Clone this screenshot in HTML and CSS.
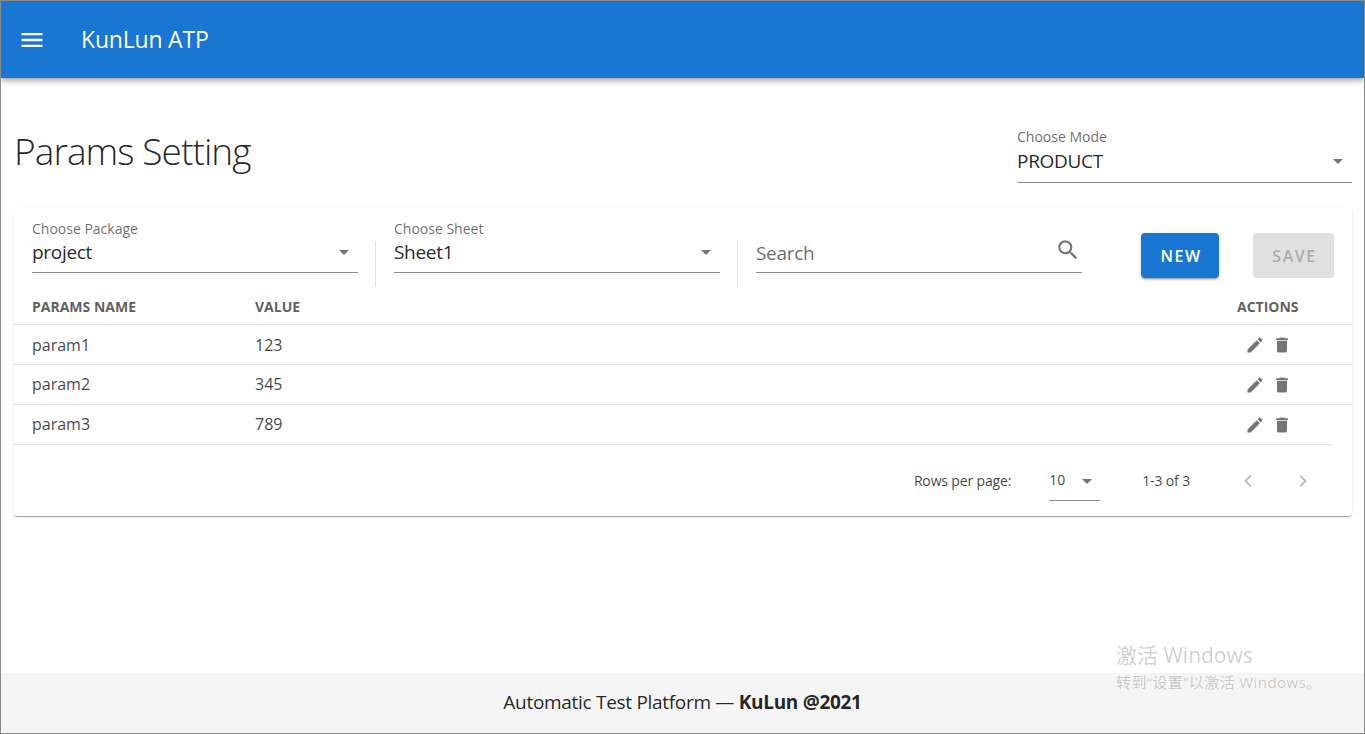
FILE: index.html
```html
<!DOCTYPE html>
<html lang="en">

<head>
    <meta charset="utf-8">
    <title>KunLun ATP</title>
    <link rel="stylesheet" href="styles.css">
</head>

<body>
    <div class="app">
        <header class="appbar">
            <svg class="menu-icon" viewBox="0 0 24 24" width="28" height="28"><path d="M3 18h18v-2H3v2zm0-5h18v-2H3v2zm0-7v2h18V6H3z"/></svg>
            <div class="brand">KunLun ATP</div>
        </header>

        <main class="content">
            <div class="page-head">
                <h1 class="page-title">Params Setting</h1>
                <div class="field mode-field">
                    <label>Choose Mode</label>
                    <div class="field-value">PRODUCT<span class="caret"></span></div>
                </div>
            </div>

            <section class="card">
                <div class="toolbar">
                    <div class="field">
                        <label>Choose Package</label>
                        <div class="field-value">project<span class="caret"></span></div>
                    </div>
                    <div class="divider"></div>
                    <div class="field">
                        <label>Choose Sheet</label>
                        <div class="field-value">Sheet1<span class="caret"></span></div>
                    </div>
                    <div class="divider"></div>
                    <div class="field search-field">
                        <div class="field-value search-text">Search
                            <svg class="search-icon" viewBox="0 0 24 24" width="26" height="26"><path d="M15.5 14h-.79l-.28-.27A6.47 6.47 0 0 0 16 9.5 6.5 6.5 0 1 0 9.5 16c1.61 0 3.09-.59 4.23-1.57l.27.28v.79l5 4.99L20.49 19l-4.99-5zm-6 0C7.01 14 5 11.99 5 9.5S7.01 5 9.5 5 14 7.01 14 9.5 11.99 14 9.5 14z"/></svg>
                        </div>
                    </div>
                    <button class="btn btn-new">NEW</button>
                    <button class="btn btn-save">SAVE</button>
                </div>

                <div class="row row-head">
                    <div>PARAMS NAME</div>
                    <div>VALUE</div>
                    <div>ACTIONS</div>
                </div>
                <div class="row">
                    <div>param1</div>
                    <div>123</div>
                    <div class="actions">
                        <svg viewBox="0 0 24 24" width="20" height="20"><path d="M3 17.25V21h3.75L17.81 9.94l-3.75-3.75L3 17.25zM20.71 7.04a1 1 0 0 0 0-1.41l-2.34-2.34a1 1 0 0 0-1.41 0l-1.83 1.83 3.75 3.75 1.83-1.83z"/></svg>
                        <svg viewBox="0 0 24 24" width="20" height="20"><path d="M6 19c0 1.1.9 2 2 2h8c1.1 0 2-.9 2-2V7H6v12zM19 4h-3.5l-1-1h-5l-1 1H5v2h14V4z"/></svg>
                    </div>
                </div>
                <div class="row row-up">
                    <div>param2</div>
                    <div>345</div>
                    <div class="actions">
                        <svg viewBox="0 0 24 24" width="20" height="20"><path d="M3 17.25V21h3.75L17.81 9.94l-3.75-3.75L3 17.25zM20.71 7.04a1 1 0 0 0 0-1.41l-2.34-2.34a1 1 0 0 0-1.41 0l-1.83 1.83 3.75 3.75 1.83-1.83z"/></svg>
                        <svg viewBox="0 0 24 24" width="20" height="20"><path d="M6 19c0 1.1.9 2 2 2h8c1.1 0 2-.9 2-2V7H6v12zM19 4h-3.5l-1-1h-5l-1 1H5v2h14V4z"/></svg>
                    </div>
                </div>
                <div class="row row-up row-last">
                    <div>param3</div>
                    <div>789</div>
                    <div class="actions">
                        <svg viewBox="0 0 24 24" width="20" height="20"><path d="M3 17.25V21h3.75L17.81 9.94l-3.75-3.75L3 17.25zM20.71 7.04a1 1 0 0 0 0-1.41l-2.34-2.34a1 1 0 0 0-1.41 0l-1.83 1.83 3.75 3.75 1.83-1.83z"/></svg>
                        <svg viewBox="0 0 24 24" width="20" height="20"><path d="M6 19c0 1.1.9 2 2 2h8c1.1 0 2-.9 2-2V7H6v12zM19 4h-3.5l-1-1h-5l-1 1H5v2h14V4z"/></svg>
                    </div>
                </div>

                <div class="pager">
                    <span class="pager-text">Rows per page:</span>
                    <div class="pager-select">10<span class="caret"></span></div>
                    <span class="pager-text pager-count">1-3 of 3</span>
                    <svg class="pager-arrow" viewBox="0 0 24 24" width="24" height="24"><path d="M15.41 7.41 14 6l-6 6 6 6 1.41-1.41L10.83 12z"/></svg>
                    <svg class="pager-arrow" viewBox="0 0 24 24" width="24" height="24"><path d="M10 6 8.59 7.41 13.17 12l-4.58 4.59L10 18l6-6z"/></svg>
                </div>
            </section>
        </main>

        <footer class="footer">Automatic Test Platform —&nbsp;<strong>KuLun @2021</strong></footer>

        <div class="watermark">
            <div class="watermark-big">激活 Windows</div>
            <div class="watermark-small">转到“设置”以激活 Windows。</div>
        </div>
    </div>
</body>

</html>
```

FILE: styles.css
```css
* {
    box-sizing: border-box;
}

html, body {
    margin: 0;
    height: 100%;
}

body {
    font-family: "Open Sans", "Noto Sans CJK SC", sans-serif;
    color: rgba(0, 0, 0, 0.87);
    background: #fff;
}

.app {
    position: relative;
    height: 734px;
    border: 1px solid #8a8a8a;
    display: flex;
    flex-direction: column;
    overflow: hidden;
}

.appbar {
    height: 77px;
    flex: none;
    background: #1976d2;
    color: #fff;
    display: flex;
    align-items: center;
    padding-left: 17px;
    box-shadow: 0 2px 4px -1px rgba(0, 0, 0, .2), 0 4px 5px rgba(0, 0, 0, .14), 0 1px 10px rgba(0, 0, 0, .12);
    z-index: 2;
}

.menu-icon {
    fill: #fff;
}

.brand {
    margin-left: 35px;
    margin-bottom: 2px;
    font-size: 23px;
    font-weight: 500;
    letter-spacing: -0.2px;
}

.content {
    flex: 1;
    padding: 0 12px 0 13px;
}

.page-head {
    height: 130px;
    display: flex;
    justify-content: space-between;
    align-items: flex-start;
}

.page-title {
    margin: 47px 0 0;
    font-size: 37px;
    font-weight: 300;
    line-height: 52px;
    letter-spacing: -0.92px;
}

.field {
    width: 326px;
    flex: none;
}

.mode-field {
    width: 335px;
    margin-top: 50px;
}

.mode-field label {
    margin-bottom: 1px;
}

.mode-field .field-value {
    height: 37px;
}

.field label {
    display: block;
    font-size: 14px;
    line-height: 17px;
    color: rgba(0, 0, 0, 0.6);
}

.field-value {
    position: relative;
    height: 36px;
    line-height: 30px;
    font-size: 19px;
    border-bottom: 1px solid #8c8c8c;
    letter-spacing: -0.3px;
}

.caret {
    position: absolute;
    right: 9px;
    top: 13px;
    border-left: 5px solid transparent;
    border-right: 5px solid transparent;
    border-top: 5px solid #757575;
}

.card {
    height: 308px;
    background: #fff;
    border-radius: 4px;
    box-shadow: 0 2px 1px -1px rgba(0, 0, 0, .2), 0 1px 1px rgba(0, 0, 0, .14), 0 1px 3px rgba(0, 0, 0, .12);
}

.toolbar {
    height: 78px;
    padding: 12px 18px 0;
    display: flex;
    align-items: flex-start;
}

.divider {
    width: 1px;
    height: 44px;
    margin: 22px 18px 0 17px;
    background: #e0e0e0;
}

.search-field {
    padding-top: 17px;
}

.search-text {
    line-height: 32px;
    color: rgba(0, 0, 0, 0.6);
}

.search-icon {
    position: absolute;
    right: 1px;
    top: 0;
    fill: #757575;
}

.btn {
    height: 45px;
    margin-top: 13px;
    padding: 0 0 0 2px;
    border: 0;
    border-radius: 4px;
    font-family: inherit;
    font-size: 16px;
    font-weight: 600;
    letter-spacing: 1.5px;
}

.btn-new {
    width: 78px;
    margin-left: 59px;
    background: #1976d2;
    color: #fff;
    box-shadow: 0 3px 1px -2px rgba(0, 0, 0, .2), 0 2px 2px rgba(0, 0, 0, .14), 0 1px 5px rgba(0, 0, 0, .12);
}

.btn-save {
    width: 81px;
    margin-left: 34px;
    background: #e0e0e0;
    color: rgba(0, 0, 0, 0.26);
}

.row {
    display: grid;
    grid-template-columns: 223px 1fr 97px;
    align-items: center;
    height: 40px;
    padding-left: 18px;
    padding-right: 18px;
    border-bottom: 1px solid #e0e0e0;
    font-size: 16px;
    color: rgba(0, 0, 0, 0.75);
}

.row-head {
    height: 39px;
    padding-top: 2px;
    font-size: 14px;
    font-weight: 700;
    color: rgba(0, 0, 0, 0.65);
}

.row-up > div:not(.actions) {
    padding-bottom: 2px;
}

.row-last {
    grid-template-columns: 223px 1fr 95px;
    margin-right: 20px;
    padding-right: 0;
}

.actions {
    display: flex;
    gap: 7px;
    margin-left: 8px;
}

.actions svg {
    fill: #757575;
}

.pager {
    height: 72px;
    display: flex;
    align-items: center;
    justify-content: flex-end;
    padding-right: 37px;
    font-size: 14px;
    color: rgba(0, 0, 0, 0.75);
}

.pager-text {
    padding-bottom: 2px;
    letter-spacing: -0.15px;
}

.pager-select {
    position: relative;
    width: 51px;
    height: 40px;
    margin-left: 38px;
    line-height: 38px;
    border-bottom: 1px solid #8c8c8c;
}

.pager-select .caret {
    top: 18px;
    right: 8px;
}

.pager-count {
    margin-left: 42px;
    margin-right: 39px;
}

.pager-arrow {
    fill: rgba(0, 0, 0, 0.26);
    margin-left: 7px;
}

.pager-arrow + .pager-arrow {
    margin-left: 31px;
}

.footer {
    height: 60px;
    flex: none;
    background: #f5f5f5;
    display: flex;
    align-items: center;
    justify-content: center;
    padding-bottom: 2px;
    font-size: 19px;
    letter-spacing: -0.3px;
}

/* sits over the footer, same as the os overlay */
.watermark {
    position: absolute;
    left: 1115px;
    top: 639px;
    color: rgba(0, 0, 0, 0.2);
    font-family: "Open Sans", "Noto Sans CJK SC", sans-serif;
}

.watermark-big {
    font-size: 21px;
    line-height: 30px;
}

.watermark-small {
    margin-top: 2px;
    font-size: 15px;
    line-height: 20px;
    letter-spacing: 0.4px;
}
```
